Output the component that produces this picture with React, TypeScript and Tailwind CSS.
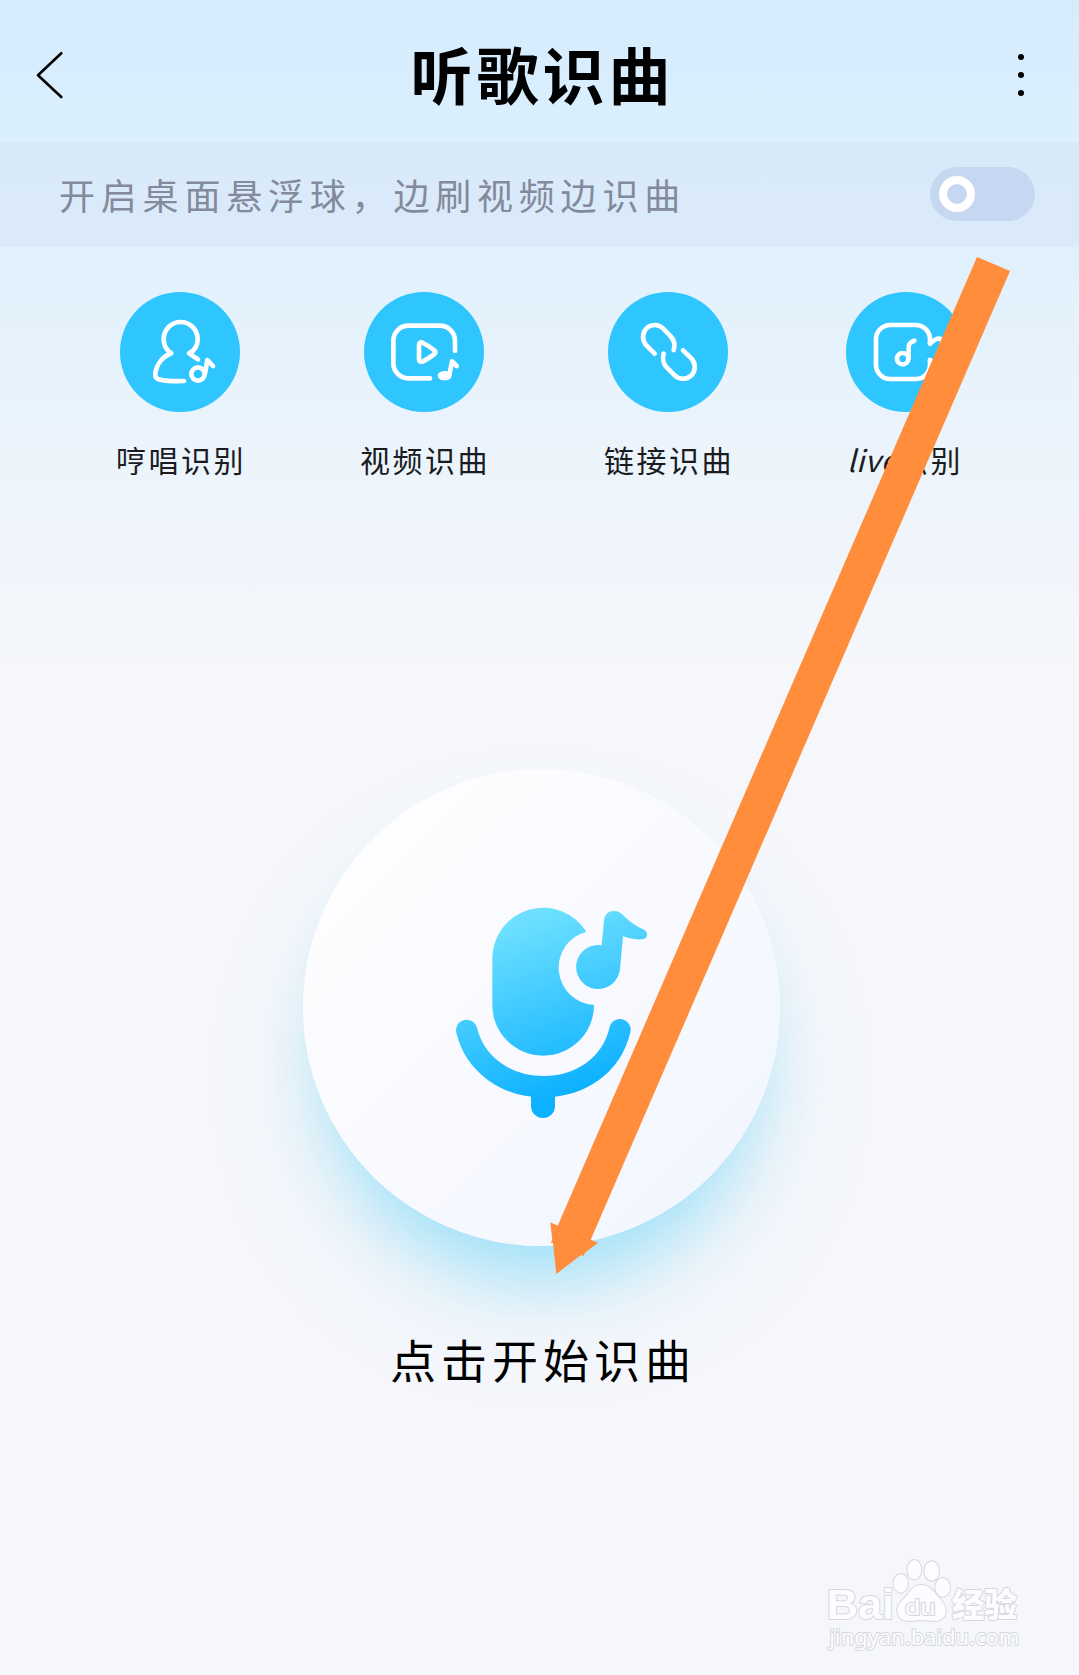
import React from "react";

const hand = "font-['Noto_Sans_CJK_SC',sans-serif]";

function IconHum() {
  return (
    <g transform="translate(-60 -36)">
      <path d="M252 303C225 304 200 303 180 299C168 297 165 291 166 281C170 250 190 228 214 220C198 210 191 196 191 177A51 51 0 0 1 293 177C293 195 284 212 267 220L294 238" />
      <circle cx="294" cy="282" r="20" />
      <path d="M315 281L322 240L339 258" />
    </g>
  );
}

function IconVideo() {
  return (
    <g transform="translate(-792 -36)">
      <path d="M990 295H925A45 45 0 0 1 880 250V182A45 45 0 0 1 925 137H1020A45 45 0 0 1 1065 182V213" />
      <path d="M957 216V196C957 187 962 185 969 189C981 195 992 202 1002 210C1008 215 1008 218 1002 223C992 231 981 238 969 244C962 247 957 245 957 237Z" />
      <ellipse cx="1034" cy="287" rx="14" ry="7" fill="#fff" />
      <path d="M1048 285L1056 244L1070 258" />
    </g>
  );
}

function IconLink() {
  return (
    <g transform="translate(-54 -36)">
      <path d="M194 221L169 196C156 182 156 160 168 147C181 132 204 131 219 145L241 168C253 180 256 195 251 210" />
      <path d="M221 221C217 235 220 252 230 262L254 286C268 300 290 299 303 287C318 273 318 250 304 235L279 211" />
    </g>
  );
}

function IconLive() {
  return (
    <g transform="translate(-768 -36)">
      <path d="M1020 190V178A43 43 0 0 0 977 135H901A43 43 0 0 0 858 178V254A43 43 0 0 0 901 297H977A43 43 0 0 0 1020 254V240" />
      <path d="M1020 191C1034 178 1045 171 1053 178C1059 184 1059 248 1053 254C1045 260 1034 252 1020 240" />
      <circle cx="938" cy="236" r="17" />
      <path d="M956 235V202C956 190 962 187 973 182" />
    </g>
  );
}

const actions = [
  { label: "哼唱识别", Icon: IconHum, width: "w-[130px]" },
  { label: "视频识曲", Icon: IconVideo, width: "w-[130px]" },
  { label: "链接识曲", Icon: IconLink, width: "w-[130px]" },
  { latin: "live", label: "识别", Icon: IconLive, width: "w-[118px]" },
];

function Header() {
  return (
    <header className="flex h-[142px] items-center justify-between pl-[36px] pr-[50px]">
      <button className="w-[80px]">
        <svg width="28" height="48" viewBox="0 0 28 48" fill="none" stroke="#000" strokeWidth="2.6" strokeLinecap="round" strokeLinejoin="round" className="mt-[7px]">
          <path d="M25.3 2.2L2 24.3L25.3 46" />
        </svg>
      </button>
      <h1 className={`${hand} pl-[20px] pt-[3px] text-[62px] font-bold leading-none tracking-[4px] text-black`}>听歌识曲</h1>
      <button className="flex w-[80px] flex-col items-end gap-[12px] pr-[5px] pt-[7px]">
        <span className="size-[6px] rounded-full bg-black" />
        <span className="size-[6px] rounded-full bg-black" />
        <span className="size-[6px] rounded-full bg-black" />
      </button>
    </header>
  );
}

function FloatBallBar() {
  return (
    <div className="flex h-[105px] items-center justify-between bg-[linear-gradient(180deg,#d8eafa,#dbeafa)] pl-[59px] pr-[44px]">
      <span className={`${hand} mb-[2px] text-[36px] font-normal leading-none tracking-[5.800px] text-[#828a9b]`}>开启桌面悬浮球，边刷视频边识曲</span>
      <div className="mb-px flex h-[54px] w-[105px] items-center rounded-full bg-[#c6d8f1] pl-[9px]">
        <span className="size-[36px] rounded-full border-8 border-white" />
      </div>
    </div>
  );
}

function MicIcon() {
  return (
    <svg width="260" height="260" viewBox="0 0 780 780">
      <defs>
        <linearGradient id="mic" gradientUnits="userSpaceOnUse" x1="250" y1="130" x2="430" y2="640">
          <stop offset="0" stopColor="#6ee0ff" />
          <stop offset="1" stopColor="#0cb1ff" />
        </linearGradient>
      </defs>
      <path fill="url(#mic)" d="M187 235A152.500 152 0 0 1 469 158A112 112 0 0 0 492 378A152.500 152 0 0 1 187 378Z" />
      <path fill="url(#mic)" d="M515 199L522 125C524 105 537 96 551 96C565 96 572 101 582 111C602 131 620 142 640 151C655 158 655 176 641 180C622 183 600 180 579 172L570 270A66 66 0 1 1 503 198Z" />
      <path fill="none" stroke="url(#mic)" strokeWidth="64" strokeLinecap="round" d="M110 454C135 558 230 623 340 623C450 623 545 560 570 452" />
      <path fill="url(#mic)" d="M303 640H375V681A36 36 0 0 1 303 681Z" />
    </svg>
  );
}

function Watermark() {
  return (
    <svg width="250" height="120" viewBox="0 0 750 360" className="absolute bottom-[15px] right-[29px]">
      <g fill="#fdfdff" stroke="#d6d8dc" strokeWidth="6" paintOrder="stroke" strokeLinejoin="round">
        <text x="80" y="238" fontSize="128" fontWeight="700" textLength="202" lengthAdjust="spacingAndGlyphs" fontFamily="Liberation Sans, sans-serif">Bai</text>
        <ellipse cx="302" cy="130" rx="22" ry="28" />
        <ellipse cx="343" cy="89" rx="21" ry="29" />
        <ellipse cx="395" cy="93" rx="22" ry="29" />
        <ellipse cx="428" cy="142" rx="22" ry="28" />
        <path d="M364 135C386 135 396 148 405 160C418 177 437 190 437 212C437 232 422 243 404 243C388 243 380 240 364 240C348 240 342 243 326 243C306 243 292 232 292 211C292 189 313 178 325 160C334 146 345 135 364 135Z" />
        <text x="315" y="225" fontSize="66" fontWeight="400" textLength="92" lengthAdjust="spacingAndGlyphs" fontFamily="Liberation Sans, sans-serif">du</text>
        <text x="455" y="230" fontSize="98" fontWeight="900" textLength="196" lengthAdjust="spacingAndGlyphs" fontFamily="Noto Sans CJK SC, sans-serif">经验</text>
        <text x="88" y="316" fontSize="66" fontWeight="400" textLength="570" lengthAdjust="spacingAndGlyphs" fontFamily="Noto Sans, sans-serif">jingyan.baidu.com</text>
      </g>
    </svg>
  );
}

export default function App() {
  return (
    <div className="relative h-[1675px] w-[1079px] overflow-hidden bg-[linear-gradient(180deg,#d5ecfd_0px,#dbf0ff_142px,#e1f1fc_260px,#e9f3fc_400px,#f0f5fb_540px,#f5f7fb_660px,#f5f7fc_1675px)]">
      <Header />
      <FloatBallBar />

      <nav className="flex gap-[114px] pl-[115px] pt-[45px]">
        {actions.map(({ latin, label, Icon, width }) => (
          <div key={label} className={`${width} flex flex-col items-center`}>
            <div className="size-[120px] rounded-full bg-[#2fc5ff]">
              <svg width="120" height="120" viewBox="0 0 360 360" fill="none" stroke="#fff" strokeWidth="14" strokeLinecap="round" strokeLinejoin="round">
                <Icon />
              </svg>
            </div>
            <span className={`${hand} mt-[32px] whitespace-nowrap pl-[2px] text-[30px] font-normal leading-none tracking-[2.500px] text-[#1a1c1f]`}>
              {latin && <i className="-ml-1 tracking-[0.500px]">{latin}</i>}
              {label}
            </span>
          </div>
        ))}
      </nav>

      <main className="flex flex-col items-center pl-[3px] pt-[295px]">
        <button className="flex size-[477px] items-center justify-center rounded-full bg-[linear-gradient(135deg,#fefeff_10%,#f9faff_50%,#f1f6ff_90%)] pl-[38px] pt-[2px] shadow-[0_54px_64px_-26px_rgba(90,210,252,0.46),0_70px_90px_-6px_rgba(190,232,242,0.34),0_40px_60px_0px_rgba(215,233,238,0.2)]">
          <MicIcon />
        </button>
        <p className={`${hand} mt-[89px] pl-[4px] text-[46px] font-normal leading-none tracking-[5px] text-black`}>点击开始识曲</p>
      </main>

      <Watermark />

      <svg width="1079" height="1675" viewBox="0 0 1079 1675" className="pointer-events-none absolute inset-0">
        <path fill="#ff8d3b" d="M977 257L1010 271L590.700 1239.700L598 1242.700L584.700 1253L583.700 1256L581 1255L556.300 1274L553 1243L550.700 1242.500L552.300 1240L550.300 1222.300L557.700 1225.700Z" />
      </svg>
    </div>
  );
}
